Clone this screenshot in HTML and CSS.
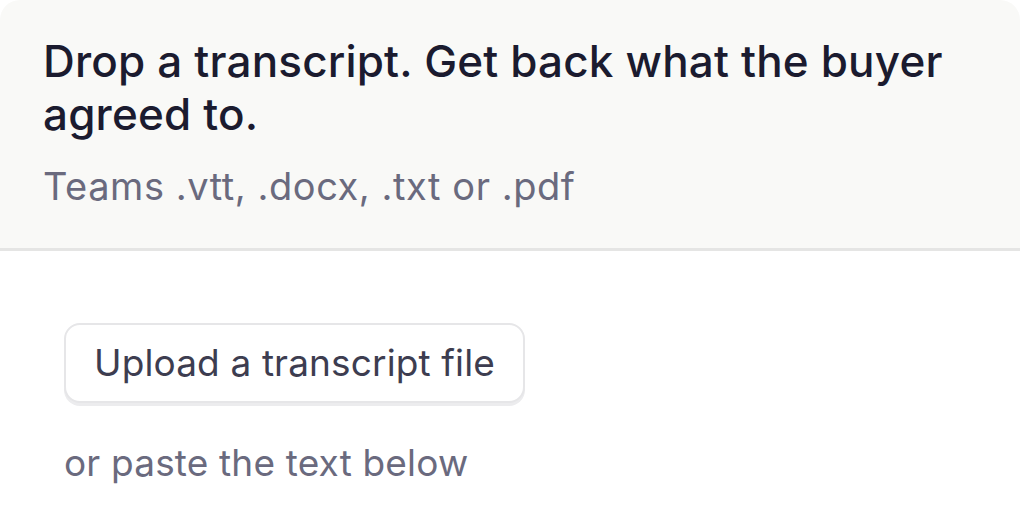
FILE: index.html
```html
<!DOCTYPE html>
<html lang="en">

<head>
  <meta charset="UTF-8">
  <title>Transcript upload</title>
  <link rel="stylesheet" href="styles.css">
</head>

<body>
  <div class="panel">
    <header class="intro">
      <h1 class="intro__title">Drop a transcript. Get back what the buyer agreed to.</h1>
      <p class="intro__formats">Teams .vtt, .docx, .txt or .pdf</p>
    </header>
    <main class="drop">
      <button class="drop__btn">Upload a transcript file</button>
      <p class="drop__hint">or paste the text below</p>
    </main>
  </div>
</body>

</html>
```

FILE: styles.css
```css
html,
body {
  margin: 0;
  font-family: Inter, "Noto Sans", sans-serif;
  -webkit-font-smoothing: antialiased;
  background-color: #fff;
}

.panel {
  border-radius: 20px 20px 0 0;
  overflow: hidden;
}

.intro {
  padding: 35px 43px 39px;
  background-color: #f9f9f7;
  border-bottom: 3px solid #e5e5e4;
}

.intro__title {
  margin: 0;
  font-size: 44px;
  font-weight: 500;
  line-height: 53px;
  letter-spacing: 0.17px;
  color: #1b1b2f;
}

.intro__formats {
  margin: 22px 0 0;
  font-size: 38px;
  line-height: 46px;
  letter-spacing: 0.55px;
  color: #6a6a7e;
}

.drop {
  padding: 72px 64px 0;
}

.drop__btn {
  display: block;
  padding: 16px 28px;
  font-family: inherit;
  font-size: 37px;
  line-height: 44px;
  letter-spacing: 0.13px;
  color: #3d3d50;
  background-color: #fff;
  border: 2px solid #e6e6e8;
  border-radius: 16px;
  box-shadow: 0 3px 0 #ececee;
  cursor: pointer;
}

.drop__hint {
  margin: 38px 0 0;
  font-size: 37px;
  line-height: 44px;
  letter-spacing: 0.17px;
  color: #6a6a7e;
}
```
